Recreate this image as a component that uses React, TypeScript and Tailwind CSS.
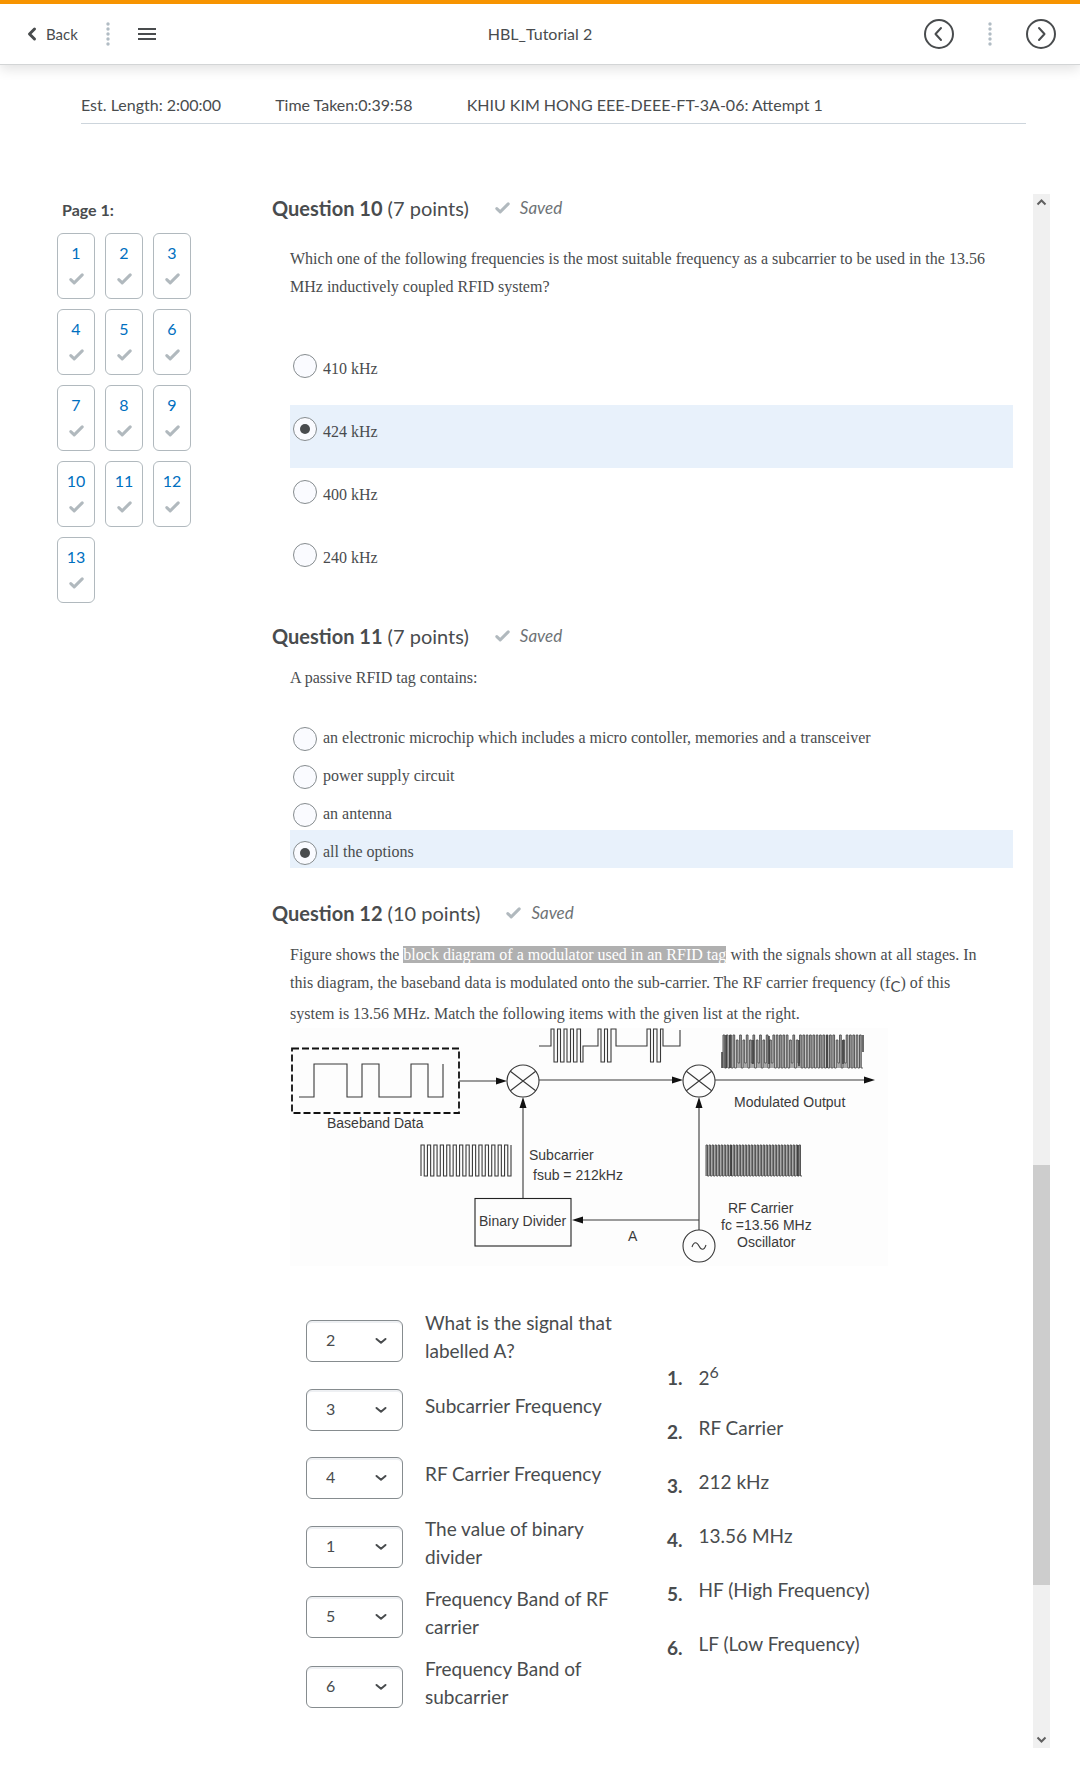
import React from "react";

type Option = { label: string; selected?: boolean };

const tiles = Array.from({ length: 13 }, (_, i) => i + 1);

const frequencyOptions: Option[] = [
  { label: "410 kHz" },
  { label: "424 kHz", selected: true },
  { label: "400 kHz" },
  { label: "240 kHz" },
];

const tagOptions: Option[] = [
  { label: "an electronic microchip which includes a micro contoller, memories and a transceiver" },
  { label: "power supply circuit" },
  { label: "an antenna" },
  { label: "all the options", selected: true },
];

const matches = [
  { value: "2", text: "What is the signal that labelled A?", tall: true },
  { value: "3", text: "Subcarrier Frequency", tall: false },
  { value: "4", text: "RF Carrier Frequency", tall: false },
  { value: "1", text: "The value of binary divider", tall: true },
  { value: "5", text: "Frequency Band of RF carrier", tall: true },
  { value: "6", text: "Frequency Band of subcarrier", tall: true },
];

const choices: React.ReactNode[] = [
  <>
    2<sup className="static align-super text-[16px] leading-6">6</sup>
  </>,
  "RF Carrier",
  "212 kHz",
  "13.56 MHz",
  "HF (High Frequency)",
  "LF (Low Frequency)",
];

function Check() {
  return (
    <svg width="15" height="12" viewBox="0 0 15 12" fill="none" aria-hidden="true">
      <path d="M1.800 6.600 5.200 9.900 13.200 1.900" stroke="#b1b9be" strokeWidth="3" strokeLinecap="round" strokeLinejoin="round" />
    </svg>
  );
}

function Dots() {
  return (
    <svg width="4" height="26" viewBox="0 0 4 26" fill="#b1bcc4" aria-hidden="true">
      {[3, 8, 13, 18, 23].map((y) => (
        <circle key={y} cx="2" cy={y} r="1.7" />
      ))}
    </svg>
  );
}

function CircleArrow({ label, d }: { label: string; d: string }) {
  return (
    <button type="button" aria-label={label}>
      <svg width="30" height="30" viewBox="0 0 30 30" fill="none" stroke="#494c4e" strokeWidth="2" strokeLinecap="round" strokeLinejoin="round">
        <circle cx="15" cy="15" r="14" />
        <path d={d} />
      </svg>
    </button>
  );
}

function Header() {
  return (
    <header className="border-b border-[#d3d5d6] border-t-4 border-t-[#f79400] bg-white shadow-[0_4px_12px_rgba(0,0,0,0.12)]">
      <div className="grid h-[60px] grid-cols-[1fr_auto_1fr] items-center px-6">
        <div className="flex items-center gap-7">
          <button type="button" className="flex items-center gap-2 text-[15px]">
            <svg width="14" height="16" viewBox="0 0 14 16" fill="none" aria-hidden="true">
              <path d="M10.500 3 5.500 8 10.500 13" stroke="#494c4e" strokeWidth="3" strokeLinecap="round" strokeLinejoin="round" />
            </svg>
            Back
          </button>
          <Dots />
          <button type="button" aria-label="Open navigation">
            <svg width="18" height="14" viewBox="0 0 18 14" fill="#494c4e">
              <path d="M0 1h18v2H0zM0 6h18v2H0zM0 11h18v2H0z" />
            </svg>
          </button>
        </div>
        <h1 className="text-[16px]">HBL_Tutorial 2</h1>
        <div className="flex items-center justify-end gap-[34px]">
          <CircleArrow label="Previous" d="M17 9 11.500 15 17 21" />
          <Dots />
          <CircleArrow label="Next" d="M13 9 18.500 15 13 21" />
        </div>
      </div>
    </header>
  );
}

function QuestionTitle({ n, points }: { n: number; points: number }) {
  return (
    <div className="flex items-center gap-[26px] pl-[14px]">
      <h2 className="text-[20px] leading-7">
        <strong>Question {n}</strong> ({points} points)
      </h2>
      <span className="flex items-center gap-[10px] text-[17px] leading-7 text-[#6e7376] italic">
        <Check />
        Saved
      </span>
    </div>
  );
}

function Options({ name, options, roomy }: { name: string; options: Option[]; roomy?: boolean }) {
  return (
    <div role="radiogroup" aria-label={name}>
      {options.map((o) => (
        <label
          key={o.label}
          className={`flex items-start gap-1.5 pl-[3px] font-['Liberation_Serif',serif] text-[16px] leading-7 ${roomy ? "h-[63px]" : "h-[38px]"} ${o.selected ? "bg-[#e8f1fb]" : ""}`}
        >
          <input
            type="radio"
            name={name}
            defaultChecked={o.selected}
            className={`grid size-6 shrink-0 appearance-none place-content-center rounded-full border border-[#868c8f] bg-[#fafbff] before:size-[10px] before:rounded-full checked:before:bg-[#494c4e] ${roomy ? "mt-3" : "mt-[11px]"}`}
          />
          <span className={roomy ? "pt-[13px]" : "pt-2"}>{o.label}</span>
        </label>
      ))}
    </div>
  );
}

function pulses(x0: number, x1: number, count: number, high: number, low: number) {
  const step = (x1 - x0) / count;
  let d = `M${x0} ${low}`;
  for (let i = 0; i < count; i++) {
    const x = x0 + i * step;
    d += `V${high}H${x + step / 2}V${low}H${x + step}`;
  }
  return d;
}

function outputWave() {
  let d = "M433 40";
  for (let i = 0; i < 42; i++) {
    const x = 433 + i * 3.33;
    const narrow = (i > 3 && i < 15) || (i > 19 && i < 24) || (i > 32 && i < 38);
    const inset = narrow && i % 2 === 0 ? 5 : 0;
    d += `V${7 + inset}H${x + 1.7}V${40 - inset}H${x + 3.33}`;
  }
  return d;
}

function Diagram() {
  return (
    <svg
      viewBox="0 0 598 238"
      className="block w-[598px] max-w-full bg-[#fdfdfd]"
      role="img"
      aria-label="Block diagram of a modulator"
      fill="none"
      stroke="#3a3a3a"
      strokeWidth="1.100"
    >
      <rect x="2" y="20.500" width="167" height="64.500" stroke="#111" strokeWidth="1.800" strokeDasharray="7 3" />
      <path d="M9 69H24V36H57V69H72V36H89V69H121V36H138V69H153V36" />
      <path d="M169 53H208M249 52H384M425 52H576M233 170V78M409 202V78M409 192H290" />
      <path d="M249 18H261V1H264V34H267.500V1H270.500V34H274V1H277V34H280.500V1H283.500V34H287V1H290.500V34H293V18H308V1H311V34H314.500V1H317.500V34H321V1H326V18H357V1H360.500V34H363.500V1H367V34H370.500V1H373V18H390V2" />
      <path d={pulses(131, 221, 14, 117, 148) + "V117"} />
      <g strokeWidth="1">
        <path d={pulses(416, 512, 32, 117, 148)} stroke="#555" fill="#a8a8a8" />
        <path d="M441 117V148M508 117V148" strokeWidth="1.500" />
        <path d={outputWave()} stroke="#555" fill="#a8a8a8" />
        <path d="M432 24V40M573 24V7M436 7V40M440 7V40M463 12V36M479 8V36M509 12V38M537 7V40M553 12V36" strokeWidth="1.500" />
      </g>
      <circle cx="233" cy="53" r="16" />
      <path d="M220 43 246 63M246 43 220 63" />
      <circle cx="409" cy="53" r="16" />
      <path d="M396 43 422 63M422 43 396 63" />
      <circle cx="409" cy="218" r="16" />
      <path d="M402 219C404 213 407 214 409 218S414 223 416 217" />
      <rect x="185" y="170.500" width="96" height="47.500" stroke="#222" />
      <g fill="#111" stroke="none">
        <path d="M217 53 206 49.500V56.500ZM393 52 382 48.500V55.500ZM585 52 574 48.500V55.500ZM282 192 293 188.500V195.500ZM233 69 229.500 80H236.500ZM409 69 405.500 80H412.500Z" />
      </g>
      <g fill="#3a3a3a" stroke="none" fontFamily="Liberation Sans, sans-serif" fontSize="14">
        <text x="37" y="100">Baseband Data</text>
        <text x="444" y="79">Modulated Output</text>
        <text x="239" y="132">Subcarrier</text>
        <text x="243" y="152">fsub = 212kHz</text>
        <text x="189" y="198">Binary Divider</text>
        <text x="338" y="213">A</text>
        <text x="438" y="185">RF Carrier</text>
        <text x="431" y="202">fc =13.56 MHz</text>
        <text x="447" y="219">Oscillator</text>
      </g>
    </svg>
  );
}

function MatchSelect({ value, label }: { value: string; label: string }) {
  return (
    <span className="relative block w-[97px] shrink-0">
      <select
        aria-label={label}
        defaultValue={value}
        className="h-[42px] w-full appearance-none rounded-md border border-[#868c8f] bg-white px-[19px] pb-[3px] text-[16px] shadow-[inset_0_2px_0_#eef0f3]"
      >
        {["1", "2", "3", "4", "5", "6"].map((v) => (
          <option key={v}>{v}</option>
        ))}
      </select>
      <svg className="pointer-events-none absolute top-[17px] right-4" width="12" height="8" viewBox="0 0 12 8" fill="none" aria-hidden="true">
        <path d="M1.500 2 6 5.800 10.500 2" stroke="#494c4e" strokeWidth="2" strokeLinecap="round" strokeLinejoin="round" />
      </svg>
    </span>
  );
}

function ScrollBar() {
  return (
    <div aria-hidden="true" className="flex w-[17px] shrink-0 flex-col items-center bg-[#f0f0f0]">
      <svg width="17" height="17" viewBox="0 0 17 17" fill="none" stroke="#606060" strokeWidth="2">
        <path d="M4.500 10.500 8.500 6.500 12.500 10.500" />
      </svg>
      <div className="grow-[955]" />
      <div className="w-full grow-[420] bg-[#cdcdcd]" />
      <div className="grow-[146]" />
      <svg width="17" height="17" viewBox="0 0 17 17" fill="none" stroke="#606060" strokeWidth="2">
        <path d="M4.500 6.500 8.500 10.500 12.500 6.500" />
      </svg>
    </div>
  );
}

const serif = "font-['Liberation_Serif',serif] text-[16px] leading-7";

export default function App() {
  return (
    <div className="min-h-screen bg-white pb-[18px] font-[Lato,sans-serif] text-[#494c4e]">
      <Header />
      <div className="mr-[54px] ml-[81px] flex gap-[54px] border-b border-[#cdd5dc] pt-[26px] pb-1 text-[16px] leading-7">
        <span>Est. Length: 2:00:00</span>
        <span>Time Taken:0:39:58</span>
        <span>KHIU KIM HONG EEE-DEEE-FT-3A-06: Attempt 1</span>
      </div>

      <div className="mt-[70px] mr-[30px] ml-[57px] flex">
        <nav aria-label="Questions" className="w-[201px] shrink-0">
          <h2 className="pt-0.5 pl-[5px] text-[16px] leading-7 font-bold">Page 1:</h2>
          <ul className="mt-[9px] flex w-[134px] flex-wrap gap-[10px]">
            {tiles.map((n) => (
              <li key={n}>
                <a href={`#q${n}`} className="flex h-[66px] w-[38px] flex-col items-center gap-2 rounded-md border border-[#b1b9be] pt-[7px] text-[16px] leading-6 text-[#006fbf]">
                  {n}
                  <Check />
                </a>
              </li>
            ))}
          </ul>
        </nav>

        <main className="min-w-0 flex-1 pr-5 pb-[26px]">
          <section id="q10">
            <QuestionTitle n={10} points={7} />
            <div className="pl-8">
              <p className={`${serif} mt-[23px] mb-[41px]`}>
                Which one of the following frequencies is the most suitable frequency as a subcarrier to be used in the 13.56 MHz inductively coupled RFID system?
              </p>
              <Options name="Subcarrier frequency" options={frequencyOptions} roomy />
            </div>
          </section>

          <section id="q11" className="pt-7">
            <QuestionTitle n={11} points={7} />
            <div className="pl-8">
              <p className={`${serif} mt-[14px] mb-6`}>A passive RFID tag contains:</p>
              <Options name="Passive tag contents" options={tagOptions} />
            </div>
          </section>

          <section id="q12" className="pt-[31px]">
            <QuestionTitle n={12} points={10} />
            <div className="pl-8">
              <p className={`${serif} mt-[14px] pr-6`}>
                Figure shows the <mark className="bg-[#b0b0b0] text-white">block diagram of a modulator used in an RFID tag</mark> with the signals shown at all stages. In this diagram, the baseband data is modulated onto the sub-carrier. The RF carrier frequency (f
                <sub className="static align-sub font-[Lato,sans-serif] text-[15px] leading-7">C</sub>) of this system is 13.56 MHz. Match the following items with the given list at the right.
              </p>
              <Diagram />
              <div className="mt-10 flex gap-[34px] pl-4 text-[19px] leading-7">
                <div className="w-[327px] shrink-0">
                  {matches.map((m) => (
                    <div key={m.text} className={`flex items-center gap-[22px] ${m.tall ? "h-[70px]" : "h-[68px]"}`}>
                      <MatchSelect value={m.value} label={m.text} />
                      <span className="pb-2">{m.text}</span>
                    </div>
                  ))}
                </div>
                <ol className="pt-[54px]">
                  {choices.map((c, i) => (
                    <li key={i} className="flex h-[54px] gap-4">
                      <strong className="pt-1">{i + 1}.</strong>
                      <span>{c}</span>
                    </li>
                  ))}
                </ol>
              </div>
            </div>
          </section>
        </main>
        <ScrollBar />
      </div>
    </div>
  );
}
